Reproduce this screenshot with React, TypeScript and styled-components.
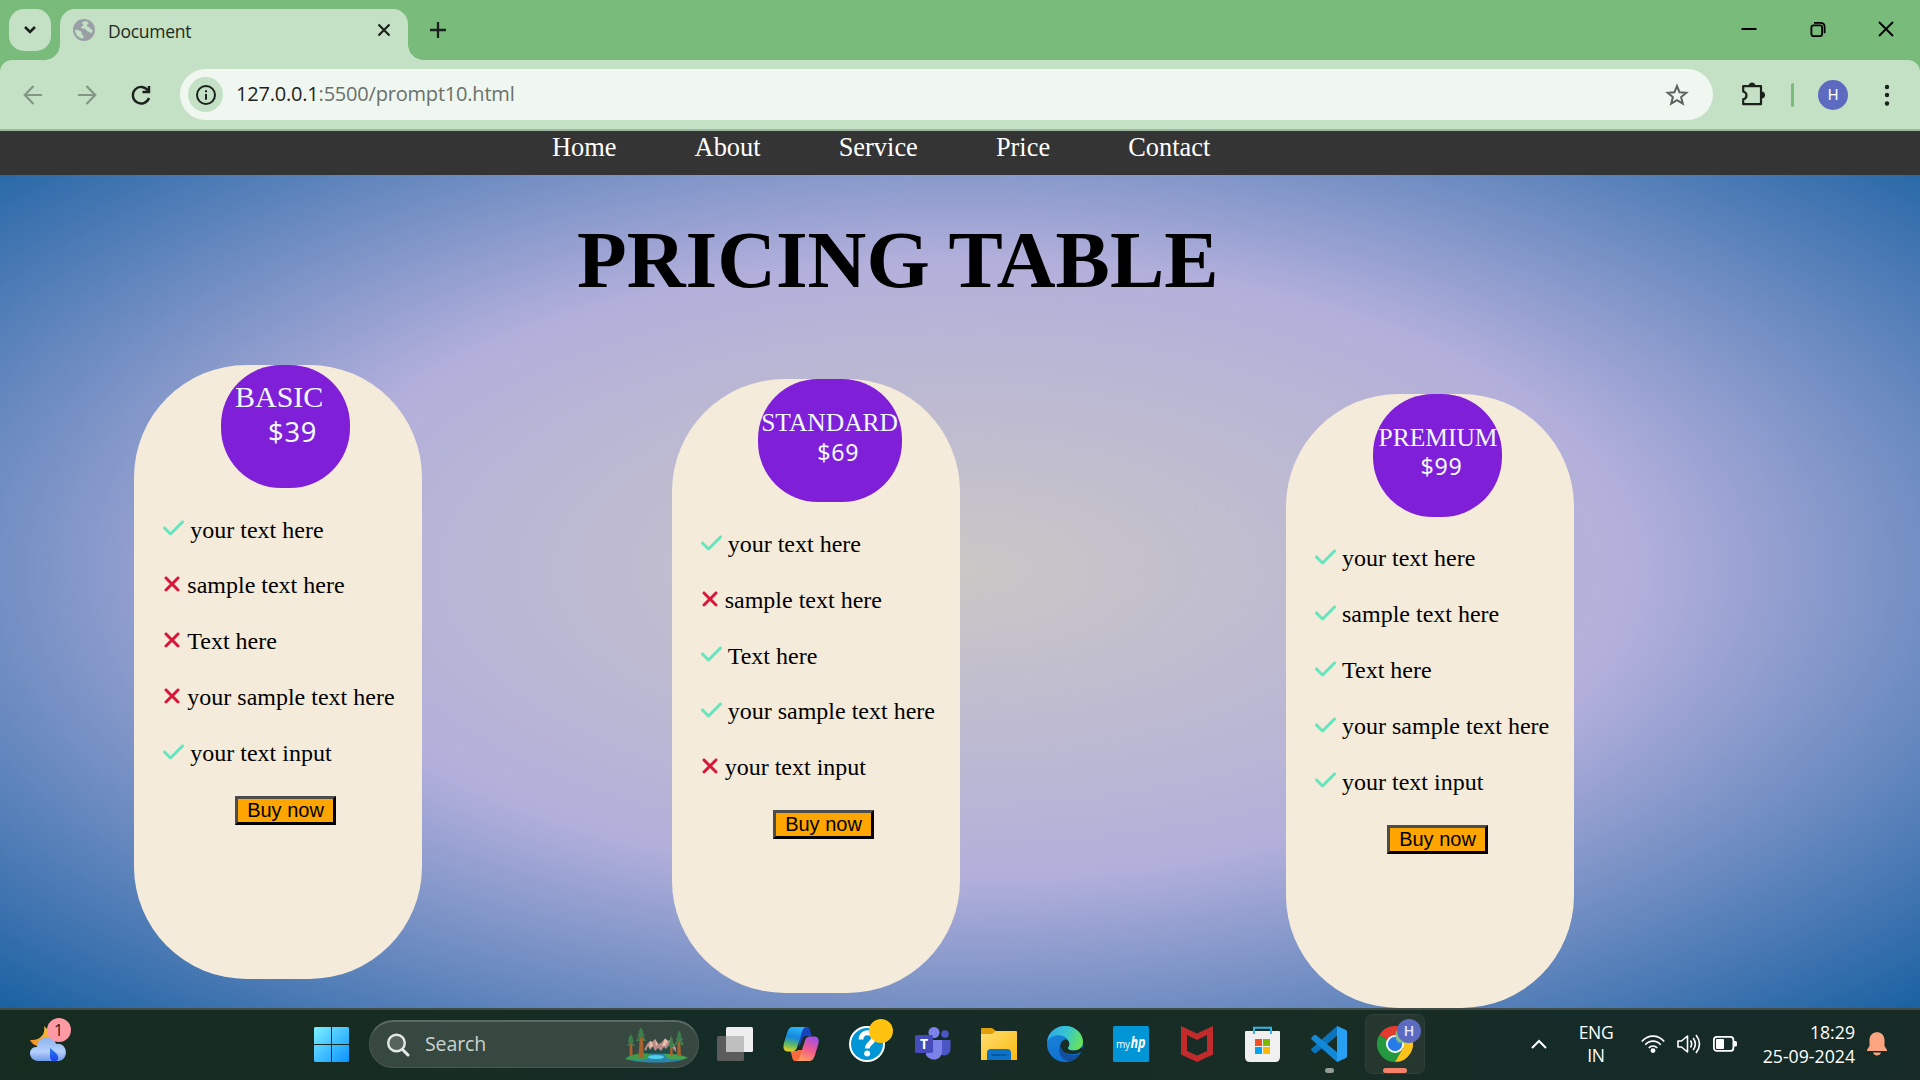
import React from "react";
import styled, { createGlobalStyle } from "styled-components";
import { FaCheck, FaXmark } from "react-icons/fa6";

const UI = `"Open Sans", "Noto Sans", sans-serif`;
const SERIF = `"Liberation Serif", "Times New Roman", serif`;

const GlobalStyle = createGlobalStyle`
  * { box-sizing: border-box; }
  html, body { margin: 0; padding: 0; overflow: hidden; }
  svg { display: block; flex: none; }
`;

const Screen = styled.div`
  width: 1920px;
  height: 1080px;
  display: flex;
  flex-direction: column;
  overflow: hidden;
  font-family: ${UI};
`;

/* ---------- browser chrome ---------- */

const TabStrip = styled.div`
  height: 60px;
  flex: none;
  background: #79bb7b;
  display: flex;
  align-items: flex-start;
  padding: 9px 25px 0 9px;
`;

const TabSearch = styled.div`
  width: 42px;
  height: 42px;
  border-radius: 15px;
  background: #c5e1c5;
  display: flex;
  align-items: center;
  justify-content: center;
`;

const Tab = styled.div`
  position: relative;
  width: 348px;
  height: 51px;
  margin-left: 9px;
  padding: 0 16px 9px 13px;
  border-radius: 15px 15px 0 0;
  background: #c5e1c5;
  display: flex;
  align-items: center;
  &::before, &::after {
    content: "";
    position: absolute;
    bottom: 0;
    width: 15px;
    height: 15px;
  }
  &::before {
    left: -15px;
    background: radial-gradient(circle at 0 0, transparent 14.5px, #c5e1c5 15px);
  }
  &::after {
    right: -15px;
    background: radial-gradient(circle at 100% 0, transparent 14.5px, #c5e1c5 15px);
  }
`;

const TabTitle = styled.span`
  flex: 1;
  margin: 2px 0 0 13px;
  font-size: 17.5px;
  line-height: 24px;
  letter-spacing: -0.25px;
  color: #1f2a20;
`;

const NewTab = styled.div`
  width: 60px;
  height: 42px;
  display: flex;
  align-items: center;
  justify-content: center;
`;

const WindowButtons = styled.div`
  margin: 11px 0 0 auto;
  display: flex;
  gap: 50.5px;
`;

const ToolbarBack = styled.div`
  height: 71px;
  flex: none;
  background: #79bb7b;
`;

const Toolbar = styled.div`
  height: 71px;
  background: #c5e1c5;
  border-radius: 12px 12px 0 0;
  border-bottom: 2px solid #9db59e;
  display: flex;
  align-items: center;
  padding: 0 24px 0 21px;
`;

const NavIcons = styled.div`
  width: 159px;
  display: flex;
  gap: 30px;
`;

const AddressBar = styled.div`
  width: 1533px;
  height: 51px;
  border-radius: 26px;
  background: #f0f7f0;
  display: flex;
  align-items: center;
  padding: 0 24px 0 8px;
`;

const InfoChip = styled.div`
  width: 35px;
  height: 35px;
  border-radius: 50%;
  background: #c5e1c5;
  display: flex;
  align-items: center;
  justify-content: center;
`;

const Url = styled.span`
  flex: 1;
  margin: -2px 0 0 13px;
  font-size: 20px;
  line-height: 28px;
  letter-spacing: -0.2px;
  color: #1f2320;
`;

const UrlPath = styled.span`
  color: #6a706b;
`;

const ToolbarRight = styled.div`
  flex: 1;
  display: flex;
  align-items: center;
  padding-left: 27px;
`;

const Divider = styled.div`
  width: 3px;
  height: 24px;
  border-radius: 2px;
  background: #79bb7b;
  margin-left: 25px;
`;

const Avatar = styled.div`
  width: 30px;
  height: 30px;
  border-radius: 50%;
  margin: 1px 0 0 24px;
  background: #5c6bc0;
  color: #fff;
  font: 400 15px/30px Roboto, sans-serif;
  text-align: center;
`;

const MenuDots = styled.svg`
  margin-left: auto;
`;

/* ---------- page ---------- */

const Page = styled.main`
  height: 877px;
  flex: none;
  overflow: hidden;
  font-family: ${SERIF};
  background: radial-gradient(ellipse at center, #cac7c6 0%, #b2afdb 50%, #1a61a2 100%);
`;

const SiteNav = styled.nav`
  height: 44px;
  background: #343434;
  display: flex;
  gap: 78.1px;
  padding: 1px 0 0 552px;
`;

const SiteLink = styled.a`
  font-size: 26.4px;
  line-height: 30px;
  color: #fff;
`;

const Title = styled.h1`
  margin: 0;
  height: 130px;
  padding: 40px 0 0 577px;
  font-size: 81.4px;
  line-height: 90px;
  font-weight: bold;
  color: #000;
`;

const Plans = styled.section`
  display: flex;
  align-items: flex-start;
  padding: 60px 0 0 134px;
`;

const Card = styled.article<{ $left: number; $top: number }>`
  width: 288px;
  height: 614px;
  flex: none;
  margin: ${(p) => p.$top}px 0 0 ${(p) => p.$left}px;
  border-radius: 112.5px;
  background: #f5ebdb;
  display: flex;
  flex-direction: column;
  align-items: flex-start;
`;

const Badge = styled.div<{ $left: number; $width: number; $big?: boolean }>`
  width: ${(p) => p.$width}px;
  height: 123px;
  flex: none;
  margin-left: ${(p) => p.$left}px;
  padding-top: ${(p) => (p.$big ? 14 : 29)}px;
  border-radius: 60px;
  background: #7f1fd8;
  color: #f0f8ff;
  font-size: ${(p) => (p.$big ? 30 : 25.5)}px;
  line-height: ${(p) => (p.$big ? 35 : 29.3)}px;
  white-space: nowrap;
`;

const PlanName = styled.div<{ $indent: number }>`
  padding-left: ${(p) => p.$indent}px;
`;

const Price = styled.div<{ $indent: number }>`
  padding-left: ${(p) => p.$indent}px;
  font-family: "Noto Sans", sans-serif;
  font-size: 0.91em;
  letter-spacing: 0.03em;
`;

const Features = styled.ul<{ $left: number }>`
  list-style: none;
  margin: 14.6px 0 0 ${(p) => p.$left}px;
  padding: 0;
`;

const Feature = styled.li`
  height: 55.8px;
  display: flex;
  align-items: center;
  gap: 6px;
  font-size: 24px;
  line-height: 55.8px;
  white-space: nowrap;
  color: #000;
`;

const Mark = styled.span<{ $ok: boolean }>`
  margin-bottom: 4px;
  color: ${(p) => (p.$ok ? "#63e6be" : "#d91639")};
  svg { height: 24px; width: ${(p) => (p.$ok ? 21 : 18)}px; }
`;

const Buy = styled.button`
  width: 101px;
  height: 29px;
  margin: 14.4px 0 0 101px;
  padding: 0;
  border: 3px solid;
  border-color: #4c4c4c #000 #000 #4c4c4c;
  border-radius: 0;
  background: #ffa500;
  color: #000;
  font: 20px/23px "Liberation Sans", Arial, sans-serif;
`;

/* ---------- taskbar ---------- */

const Taskbar = styled.footer`
  height: 72px;
  flex: none;
  border-top: 2px solid #414c46;
  background: linear-gradient(90deg, #162c20 0%, #172c22 25%, #152b27 38%, #182d24 70%, #152b28 84%, #172a26 100%);
  display: flex;
  align-items: center;
  padding-bottom: 2px;
  color: #fff;
`;

const Weather = styled.div`
  position: relative;
  width: 36px;
  height: 36px;
  margin: 0 248px 0 30px;
`;

const CountBadge = styled.span<{ $bg: string; $x: number; $y: number; $light?: boolean }>`
  position: absolute;
  left: ${(p) => p.$x}px;
  top: ${(p) => p.$y}px;
  width: 24px;
  height: 24px;
  border-radius: 50%;
  background: ${(p) => p.$bg};
  color: ${(p) => (p.$light ? "#e6e8ff" : "#1b1b1b")};
  font: ${(p) => (p.$light ? "600 14px" : "400 16px")}/24px ${UI};
  text-align: center;
`;

const StartLogo = styled.svg`
  margin-top: 1px;
`;

const SearchBox = styled.div`
  width: 330px;
  height: 48px;
  margin: 0 18px 0 20px;
  padding: 0 10px 0 16px;
  border-radius: 24px;
  border: 1px solid #4b5952;
  border-top: 2px solid #5d6963;
  background: #374840;
  display: flex;
  align-items: center;
`;

const SearchText = styled.span`
  flex: 1;
  margin: -2px 0 0 15px;
  font-size: 19.5px;
  letter-spacing: -0.1px;
  color: #ccd3cf;
`;

const Apps = styled.div`
  display: flex;
  gap: 6px;
  margin-left: -12px;
`;

const AppSlot = styled.div<{ $active?: boolean }>`
  position: relative;
  width: 60px;
  height: 60px;
  border-radius: 7px;
  border: 1px solid ${(p) => (p.$active ? "#2f4039" : "transparent")};
  background: ${(p) => (p.$active ? "#26372f" : "transparent")};
  display: flex;
  align-items: center;
  justify-content: center;
`;

const Indicator = styled.span<{ $w: number; $c: string }>`
  position: absolute;
  bottom: 0;
  left: calc(50% - ${(p) => p.$w / 2}px);
  width: ${(p) => p.$w}px;
  height: 5px;
  border-radius: 3px;
  background: ${(p) => p.$c};
`;

const Tray = styled.div`
  flex: 1;
  display: flex;
  align-items: center;
  padding-left: 106px;
`;

const TrayText = styled.div<{ $w: number; $align: string; $ml: number; $lh: number; $size: number; $ls: number }>`
  width: ${(p) => p.$w}px;
  margin-left: ${(p) => p.$ml}px;
  text-align: ${(p) => p.$align};
  font-size: ${(p) => p.$size}px;
  line-height: ${(p) => p.$lh}px;
  letter-spacing: ${(p) => p.$ls}px;
  white-space: nowrap;
`;

const StatusIcons = styled.div`
  display: flex;
  gap: 12px;
  margin-left: 20px;
`;

const BellIcon = styled.svg`
  margin-left: 12px;
`;

type Plan = {
  name: string;
  price: string;
  cardLeft: number;
  cardTop: number;
  badgeLeft: number;
  badgeWidth: number;
  nameIndent: number;
  priceIndent: number;
  listLeft: number;
  big?: boolean;
  marks: boolean[];
};

const FEATURES = ["your text here", "sample text here", "Text here", "your sample text here", "your text input"];

const PLANS: Plan[] = [
  { name: "BASIC", price: "$39", cardLeft: 0, cardTop: 0, badgeLeft: 87, badgeWidth: 129, nameIndent: 14, priceIndent: 47, listLeft: 29.3, big: true, marks: [true, false, false, false, true] },
  { name: "STANDARD", price: "$69", cardLeft: 250, cardTop: 14.4, badgeLeft: 86, badgeWidth: 144, nameIndent: 3.2, priceIndent: 59.3, listLeft: 28.7, marks: [true, false, true, true, false] },
  { name: "PREMIUM", price: "$99", cardLeft: 326, cardTop: 28.8, badgeLeft: 87, badgeWidth: 129, nameIndent: 5.5, priceIndent: 47.5, listLeft: 29, marks: [true, true, true, true, true] },
];

const Globe = () => (
  <svg width="22" height="22" viewBox="0 0 22 22">
    <circle cx="11" cy="11" r="11" fill="#9a9fa6" />
    <path d="M2.2 10.5 C4 11 6.5 11 8 12.5 C9.500 14 8 16 10.500 16.500 L10.500 19.600 C5.500 19.400 2 15.500 2.200 10.500Z" fill="#c5e1c5" />
    <path d="M11 2.300 C9 3 8.500 5 10.500 5.500 C10.500 7.500 8 7 8 9 C10 10 12.500 9 13.500 11.500 C14.500 13 17 12 17.500 14.500 C18.500 14.500 19.500 12.500 19.700 11 C19 10.500 17.500 10.500 17 9 C16 7.500 14 8.500 14 6.500 C14 5 15.500 5 15.500 3.500 C14 2.500 12.500 2.300 11 2.300Z" fill="#c5e1c5" />
  </svg>
);

const WeatherArt = () => (
  <svg width="36" height="36" viewBox="0 0 36 36">
    <defs>
      <linearGradient id="moon" x1="0" y1="1" x2="1" y2="0"><stop offset="0" stopColor="#f08a24" /><stop offset="1" stopColor="#fbc63a" /></linearGradient>
      <linearGradient id="cloud" x1="0" y1="0" x2="0" y2="1"><stop offset="0" stopColor="#8db4f2" /><stop offset=".6" stopColor="#b4cffa" /><stop offset="1" stopColor="#6f9ae8" /></linearGradient>
      <linearGradient id="drop" x1="0" y1="0" x2="0" y2="1"><stop offset="0" stopColor="#2a7bf0" /><stop offset="1" stopColor="#1c3fe8" /></linearGradient>
    </defs>
    <path d="M14 0 C16 8 10 15 0 14 C2 18 5 20 9 20 L20 14 L20 6Z" fill="url(#moon)" />
    <path d="M8 35 C-3 34 -2 20 7 21 C8 9 24 9 26 18 C38 16 39 34 29 35Z" fill="url(#cloud)" />
    <path d="M20 22 C26 27 29 29 28 33 C26.500 37 20 36 20 31Z" fill="url(#drop)" />
  </svg>
);

const WindowsLogo = () => (
  <StartLogo width="35" height="35" viewBox="0 0 35 35">
    <defs><linearGradient id="win" x1="0" y1="0" x2="1" y2="1"><stop offset="0" stopColor="#7cf0ff" /><stop offset="1" stopColor="#0a93ff" /></linearGradient></defs>
    <path d="M1 0H17V17H0V1ZM18 0H34L35 1V17H18ZM0 18H17V35H1L0 34ZM18 18H35V34L34 35H18Z" fill="url(#win)" />
  </StartLogo>
);

const LakeArt = () => (
  <svg width="63" height="36" viewBox="0 0 63 36">
    <path d="M18 25 L22 17 L25 14 L27 15 L30 12 L33 17 L36 16 L40 11.500 L43 14 L46 12 L51 21 V26Z" fill="#b98b86" />
    <path d="M25 14 L27 15 L28 19 L24 21ZM30 12 L33 17 L31 19ZM40 11.500 L43 14 L40 19 L37 19Z" fill="#e6bfae" />
    <path d="M17 27 L19 22 L21 24 L23 19 L25 23 L28 19.500 L30 24 L33 21 L36 24 L39 20 L41 22 L44 18 L47 21 L51 25 V27Z" fill="#1f4d47" />
    <ellipse cx="31" cy="31" rx="29" ry="4.500" fill="#2b86ad" />
    <path d="M0 32 C6 27 18 25 27 28 C20 30 26 32 18 33 C10 34 4 33 0 32Z" fill="#3f9a4b" />
    <path d="M63 31 C56 27 42 26 38 28 C44 29 38 31 46 32 C54 33 60 32 63 31Z" fill="#46a24c" />
    <ellipse cx="31" cy="30" rx="8" ry="2" fill="#4fd0ee" />
    <path d="M5 9h2l.6 20H4.500ZM15 4h2.500l1.500 27h-5.500ZM45.500 10h1.500l.8 18H45ZM53 7h1.800l1.200 22h-4Z" fill="#a5622c" />
    <path d="M6 7 L8.500 12 H7.500 L9 15 H7 L10 19 H7V17H4.500V19H2 L4.500 15 H2.500 L4 12 H3ZM16 0 L18.500 5 H17.500 L20 9 H18 L21.500 14 H18 V11 H14.500 V14 H11 L14 9 H12 L14.500 5 H13.500ZM46 8 L48 13 L47.500 14 L49 20 H43.500 L45 14ZM54 3 L56.500 8 H55.500 L58 13 H56.500 L59 18 H55.500 V15 H52.500 V18 H49 L52 13 H50.500 L53 8 H52Z" fill="#3c7d4b" />
  </svg>
);

const Copilot = () => (
  <svg width="36" height="34" viewBox="0 0 36 34">
    <defs>
      <linearGradient id="cpA" x1=".4" y1="0" x2=".2" y2="1"><stop offset="0" stopColor="#27b3f5" /><stop offset=".4" stopColor="#1786e0" /><stop offset=".7" stopColor="#58b96b" /><stop offset="1" stopColor="#f5cf1c" /></linearGradient>
      <linearGradient id="cpB" x1=".7" y1="0" x2=".3" y2="1"><stop offset="0" stopColor="#a04fe8" /><stop offset=".5" stopColor="#ee5a8d" /><stop offset="1" stopColor="#ffa15e" /></linearGradient>
    </defs>
    <path d="M19 0 H24 C27 0 27.500 5 29 9 H24 C19 9 18 15 16 22 L15 10Z" fill="#1643c0" />
    <path d="M17 34 H12 C9 34 9 28 7.500 24 H13 C17 24 18 18 20 12 L21 23Z" fill="#fb6a3c" />
    <path d="M10 0 H24 C20 0 19 4 17.500 10 L14.500 19 C13.500 23 12 24.500 8 24.500 H5 C0 24.500 0 20 1 16 L4 6 C5.500 1.500 7 0 10 0Z" fill="url(#cpA)" />
    <path d="M26 34 H12 C16 34 17 30 18.500 24 L21.500 15 C22.500 11 24 9.500 28 9.500 H31 C36 9.500 36.500 14 35 18 L32 28 C30.500 32.500 29 34 26 34Z" fill="url(#cpB)" />
    <path d="M20.500 9.500 H23 L19 23 H14.800Z" fill="#182c27" />
  </svg>
);

const HelpIcon = () => (
  <svg width="36" height="36" viewBox="0 0 36 36">
    <circle cx="18" cy="18" r="17" fill="#0096d6" stroke="#fff" strokeWidth="2" />
    <path d="M12 13.500 C12 4.500 24.500 5 24.500 12 C24.500 17 18.300 17 18.300 22.500" fill="none" stroke="#fff" strokeWidth="4.800" />
    <circle cx="18.200" cy="27.500" r="3" fill="#fff" />
  </svg>
);

const Teams = () => (
  <svg width="36" height="34" viewBox="0 0 36 34">
    <circle cx="30" cy="7" r="3.800" fill="#4c55c4" />
    <path d="M25 13 H35.500 V22 C35.500 28 29 30 25 27Z" fill="#4c55c4" />
    <circle cx="19" cy="5.500" r="5.500" fill="#7b83eb" />
    <path d="M11 13 H27 V24 C27 34 15 35 11 28Z" fill="#7b83eb" />
    <rect x="0" y="8" width="18" height="18" rx="1.500" fill="#454bb8" />
    <text x="9" y="22" textAnchor="middle" fontSize="14" fontWeight="700" fontFamily="Open Sans, sans-serif" fill="#fff">T</text>
  </svg>
);

const Folder = () => (
  <svg width="36" height="34" viewBox="0 0 36 34">
    <defs><linearGradient id="fold" x1="0" y1="0" x2="1" y2="1"><stop offset="0" stopColor="#ffdf73" /><stop offset="1" stopColor="#fbb90f" /></linearGradient></defs>
    <path d="M0 2 Q0 1 1 1 H11 L15 4 V10 H0Z" fill="#e19f09" />
    <path d="M0 7 H11 L15 4 H35 Q36 4 36 5 V33 H0Z" fill="url(#fold)" />
    <path d="M6 33 V26 Q6 22 10 22 H26 Q30 22 30 26 V33Z" fill="#0c72c8" />
    <path d="M11 28H25" stroke="#074f94" strokeWidth="1.600" strokeLinecap="round" />
  </svg>
);

const Edge = () => (
  <svg width="36" height="36" viewBox="0 0 36 36">
    <defs>
      <linearGradient id="edA" x1="0" y1=".3" x2="1" y2=".6"><stop offset="0" stopColor="#2ba9e8" /><stop offset=".5" stopColor="#37c6cf" /><stop offset="1" stopColor="#6be353" /></linearGradient>
      <linearGradient id="edB" x1="0" y1="0" x2=".5" y2="1"><stop offset="0" stopColor="#1b87d8" /><stop offset="1" stopColor="#0f6fd0" /></linearGradient>
    </defs>
    <circle cx="18" cy="18" r="18" fill="url(#edB)" />
    <path d="M0 16 C1 6 9 0 18 0 C29 0 36 8 36 15.500 C36 22 31 24.500 27 24.500 C22 24.500 20.500 23 21 21.500 C23 19 22.500 14 18 11 C12 7.500 3 9 0 16Z" fill="url(#edA)" />
    <path d="M13.500 18 C9.500 26 15 35 23 35.200 C27.500 34 31.500 31 33.300 27.500 C24 32 15 27 14.500 19Z" fill="#134f9e" />
    <path d="M13.500 20 C13.500 15 17 13 19.500 13.500 C23.500 16 22.500 19.500 21 21.500 C20.500 23 22 24.500 27 24.500 C30 24.500 33 23.500 34.500 21 L37 26 H33.800 C24 31 14.500 27 13.500 20Z" fill="#172d24" />
  </svg>
);

const MyHp = () => (
  <svg width="36" height="36" viewBox="0 0 36 36">
    <rect width="36" height="36" rx="1.500" fill="#0096d6" />
    <text x="3" y="21.500" fontSize="10" fontFamily="Open Sans, sans-serif" fill="#fff" textLength="14">my</text>
    <text x="17.500" y="21.500" fontSize="16" fontWeight="700" fontStyle="italic" fontFamily="Open Sans, sans-serif" fill="#fff" textLength="15" lengthAdjust="spacingAndGlyphs">hp</text>
  </svg>
);

const McAfee = () => (
  <svg width="32" height="36" viewBox="0 0 32 36">
    <path d="M0 0 L16 7.500 L32 0 V28.500 L16 36 L0 28.500Z M6 9 V25 L16 29.500 L26 25 V9 L16 14Z" fill="#c12b2b" fillRule="evenodd" />
  </svg>
);

const Store = () => (
  <svg width="36" height="36" viewBox="0 0 36 36">
    <path d="M9 8 V1.800 H26 V8" fill="none" stroke="#2fb7ea" strokeWidth="2" />
    <path d="M1 5 H34 Q35 5 35 6 V31 Q35 36 30 36 H5 Q0 36 0 31 V6 Q0 5 1 5Z" fill="#f0f0f0" />
    <path d="M9 8 V4 M26 8 V4" stroke="#2fb7ea" strokeWidth="2" />
    <path d="M10 13h7v7h-7z" fill="#f25022" /><path d="M18 13h7v7h-7z" fill="#7fba00" /><path d="M10 21h7v7h-7z" fill="#00a4ef" /><path d="M18 21h7v7h-7z" fill="#ffb900" />
  </svg>
);

const VsCode = () => (
  <svg width="36" height="36" viewBox="0 0 36 36">
    <path d="M26 0 L27 9 L5 27 Q3.500 27.500 2.500 26.500 L.5 24.500 Q-.3 23.500 .7 22.500Z" fill="#0b74bd" />
    <path d="M26 36 L27 27 L5 9 Q3.500 8.500 2.500 9.500 L.5 11.500 Q-.3 12.500 .7 13.500Z" fill="#1288d6" />
    <path d="M26 0 L35 4 Q36 4.500 36 6 V30 Q36 31.500 35 32 L26 36Z" fill="#27a0f2" />
  </svg>
);

const ChromeLogo = () => (
  <svg width="36" height="36" viewBox="0 0 36 36">
    <path d="M18 18 L2.400 9 A18 18 0 0 1 33.600 9 H18Z" fill="#e53b2e" />
    <path d="M18 18 L2.400 9 A18 18 0 0 0 18 36 L25.800 22.500Z" fill="#25993f" />
    <path d="M18 9 H33.600 A18 18 0 0 1 18 36 L25.800 22.500Z" fill="#fcc31b" />
    <circle cx="18" cy="18" r="9" fill="#fff" />
    <circle cx="18" cy="18" r="7.200" fill="#2a7bea" />
    <path d="M20 4 C17.500 8 18 13 21.500 16.500 L30 17 L24 4Z" fill="#86c285" />
  </svg>
);

export default function App() {
  return (
    <Screen>
      <GlobalStyle />
      <TabStrip>
        <TabSearch>
          <svg width="14" height="10" viewBox="0 0 14 10"><path d="M2 2 L7 7 L12 2" fill="none" stroke="#1c211d" strokeWidth="2.600" /></svg>
        </TabSearch>
        <Tab>
          <Globe />
          <TabTitle>Document</TabTitle>
          <svg width="16" height="16" viewBox="0 0 16 16"><path d="M2.500 2.500 L13.500 13.500 M13.500 2.500 L2.500 13.500" stroke="#1c211d" strokeWidth="2.200" /></svg>
        </Tab>
        <NewTab>
          <svg width="16" height="16" viewBox="0 0 16 16"><path d="M8 0V16M0 8H16" stroke="#1c211d" strokeWidth="2.300" /></svg>
        </NewTab>
        <WindowButtons>
          <svg width="18" height="18" viewBox="0 0 18 18"><path d="M1.500 9H16.500" stroke="#000" strokeWidth="2" /></svg>
          <svg width="18" height="18" viewBox="0 0 18 18" fill="none" stroke="#000" strokeWidth="1.800">
            <rect x="2.400" y="5.400" width="10.700" height="10.700" rx="2" />
            <path d="M5 2.800 H11.500 Q15.600 2.800 15.600 7 V13.300" />
          </svg>
          <svg width="18" height="18" viewBox="0 0 18 18"><path d="M2 2 L16 16 M16 2 L2 16" stroke="#000" strokeWidth="1.900" /></svg>
        </WindowButtons>
      </TabStrip>

      <ToolbarBack>
        <Toolbar>
          <NavIcons>
            <svg width="24" height="24" viewBox="0 0 24 24"><path d="M21 12H4M12.500 3 L3.800 12 L12.500 21" fill="none" stroke="#829683" strokeWidth="2.200" /></svg>
            <svg width="24" height="24" viewBox="0 0 24 24"><path d="M3 12H20M11.500 3 L20.200 12 L11.500 21" fill="none" stroke="#829683" strokeWidth="2.200" /></svg>
            <svg width="24" height="24" viewBox="0 0 24 24">
              <path d="M20 15 A8.300 8.300 0 1 1 19 7.500" fill="none" stroke="#1c211d" strokeWidth="2.400" />
              <path d="M20 3 V9 H13.500" fill="none" stroke="#1c211d" strokeWidth="2.400" />
            </svg>
          </NavIcons>
          <AddressBar>
            <InfoChip>
              <svg width="22" height="22" viewBox="0 0 22 22">
                <circle cx="11" cy="11" r="9" fill="none" stroke="#1c211d" strokeWidth="2" />
                <path d="M11 10V15.800M11 6.200V8.200" stroke="#1c211d" strokeWidth="2" />
              </svg>
            </InfoChip>
            <Url>127.0.0.1<UrlPath>:5500/prompt10.html</UrlPath></Url>
            <svg width="24" height="24" viewBox="0 0 24 24">
              <path d="M12 3 L14.500 9.200 L21.300 9.700 L16.100 14.100 L17.800 20.700 L12 17.100 L6.200 20.700 L7.900 14.100 L2.700 9.700 L9.500 9.200Z" fill="none" stroke="#5d6360" strokeWidth="2" />
            </svg>
          </AddressBar>
          <ToolbarRight>
            <svg width="26" height="28" viewBox="0 0 26 28">
              <path d="M3.200 5.200 H21 V23.200 H3.200 V18.300 C7.600 17.500 7.600 11.500 3.200 10.500Z" fill="none" stroke="#1c211d" strokeWidth="2.200" strokeLinejoin="round" />
              <path d="M8.500 5 C8.500 .2 15.500 .2 15.500 5ZM21.500 10.500 C26.300 10.500 26.300 17.500 21.500 17.500Z" fill="#1c211d" />
            </svg>
            <Divider />
            <Avatar>H</Avatar>
            <MenuDots width="18" height="24" viewBox="0 0 18 24" fill="#1c211d"><circle cx="9" cy="4" r="2.200" /><circle cx="9" cy="12" r="2.200" /><circle cx="9" cy="20.500" r="2.200" /></MenuDots>
          </ToolbarRight>
        </Toolbar>
      </ToolbarBack>

      <Page>
        <SiteNav>
          {["Home", "About", "Service", "Price", "Contact"].map((t) => <SiteLink key={t}>{t}</SiteLink>)}
        </SiteNav>
        <Title>PRICING TABLE</Title>
        <Plans>
          {PLANS.map((p) => (
            <Card key={p.name} $left={p.cardLeft} $top={p.cardTop}>
              <Badge $left={p.badgeLeft} $width={p.badgeWidth} $big={p.big}>
                <PlanName $indent={p.nameIndent}>{p.name}</PlanName>
                <Price $indent={p.priceIndent}>{p.price}</Price>
              </Badge>
              <Features $left={p.listLeft}>
                {FEATURES.map((f, i) => (
                  <Feature key={f}>
                    <Mark $ok={p.marks[i]}>{p.marks[i] ? <FaCheck /> : <FaXmark />}</Mark>
                    {f}
                  </Feature>
                ))}
              </Features>
              <Buy>Buy now</Buy>
            </Card>
          ))}
        </Plans>
      </Page>

      <Taskbar>
        <Weather>
          <WeatherArt />
          <CountBadge $bg="#ff99a4" $x={16.5} $y={-8}>1</CountBadge>
        </Weather>
        <WindowsLogo />
        <SearchBox>
          <svg width="24" height="24" viewBox="0 0 24 24"><circle cx="10.500" cy="10" r="8.300" fill="#56645d" stroke="#e4e8e6" strokeWidth="2.400" /><path d="M16.500 16.500 L22 22" stroke="#e4e8e6" strokeWidth="3" strokeLinecap="round" /></svg>
          <SearchText>Search</SearchText>
          <LakeArt />
        </SearchBox>
        <Apps>
          <AppSlot>
            <svg width="36" height="34" viewBox="0 0 36 34"><rect x="9" y="0" width="27" height="25" rx="1.500" fill="#eeeeee" /><rect x="0" y="9" width="27" height="25" rx="1.500" fill="#5c5c5c" /><path d="M9 9H27V25H9Z" fill="#bfbfbf" /></svg>
          </AppSlot>
          <AppSlot><Copilot /></AppSlot>
          <AppSlot><HelpIcon /><CountBadge $bg="#ffc20e" $x={31} $y={4} /></AppSlot>
          <AppSlot><Teams /></AppSlot>
          <AppSlot><Folder /></AppSlot>
          <AppSlot><Edge /></AppSlot>
          <AppSlot><MyHp /></AppSlot>
          <AppSlot><McAfee /></AppSlot>
          <AppSlot><Store /></AppSlot>
          <AppSlot><VsCode /><Indicator $w={9} $c="#959c98" /></AppSlot>
          <AppSlot $active><ChromeLogo /><CountBadge $bg="#5c6bc0" $x={31} $y={4} $light>H</CountBadge><Indicator $w={24} $c="#f4806a" /></AppSlot>
        </Apps>
        <Tray>
          <svg width="16" height="10" viewBox="0 0 16 10"><path d="M1 9 L8 2 L15 9" fill="none" stroke="#fff" strokeWidth="2" /></svg>
          <TrayText $w={50} $align="center" $ml={24} $lh={23} $size={17.5} $ls={-0.3}>ENG<br />IN</TrayText>
          <StatusIcons>
            <svg width="24" height="20" viewBox="0 0 24 20" fill="none" stroke="#fff" strokeWidth="1.700"><path d="M.8 7.500 C7 .3 17 .3 23.200 7.500M4.300 10.800 C8.500 6 15.500 6 19.700 10.800M7.800 14 C10 11.300 14 11.300 16.200 14" /><circle cx="12" cy="16.600" r="1.600" fill="#fff" stroke="none" /><circle cx="12" cy="16.600" r="1.600" /></svg>
            <svg width="24" height="20" viewBox="0 0 24 20" fill="none" stroke="#fff" strokeWidth="1.600"><path d="M1 7 H4.500 L10.500 2 V18 L4.500 13 H1ZM13.500 6.500 Q15.800 10 13.500 13.500M16.200 4 Q20.500 10 16.200 16M19 1 Q26 10 19 19" strokeLinejoin="round" /></svg>
            <svg width="24" height="20" viewBox="0 0 24 20"><rect x=".9" y="2.900" width="19.500" height="14" rx="3" fill="none" stroke="#fff" strokeWidth="1.800" /><rect x="3" y="5" width="8" height="10" rx="1" fill="#fff" /><path d="M21 7h1.500q1.500 0 1.500 1.500v2.500q0 1.500-1.500 1.500h-1.500z" fill="#fff" /></svg>
          </StatusIcons>
          <TrayText $w={98} $align="right" $ml={20} $lh={24} $size={17.7} $ls={0}>18:29<br />25-09-2024</TrayText>
          <BellIcon width="20" height="24" viewBox="0 0 20 24" fill="#fba581"><path d="M0 18 L2.500 14 V8 C2.500 -2.500 17.500 -2.500 17.500 8 V14 L20 18 V19 H0ZM6 20.500 H14 Q13 23.500 10 23.500 Q7 23.500 6 20.500Z" /></BellIcon>
        </Tray>
      </Taskbar>
    </Screen>
  );
}
